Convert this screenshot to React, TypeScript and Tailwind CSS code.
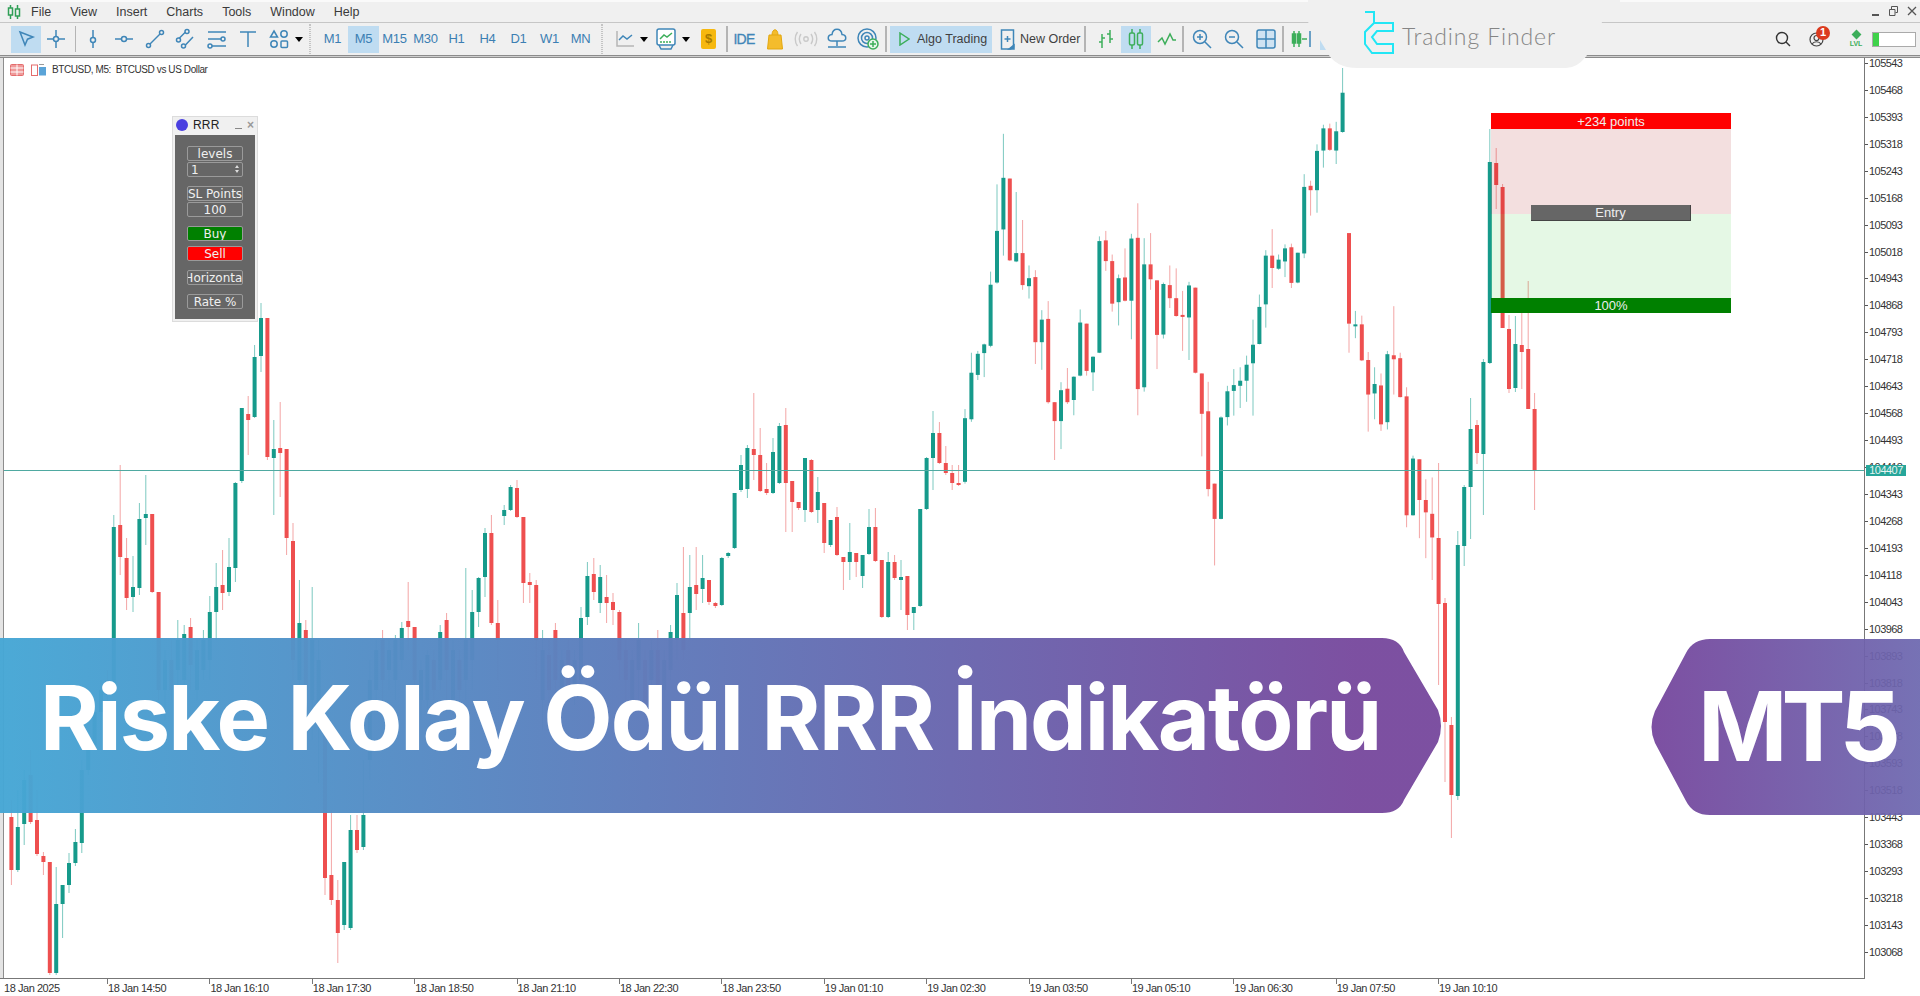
import type { ReactNode } from "react";

const GREEN = "#169a8b";
const RED = "#ee4f4f";
const GREEN_WICK = "#7cc9c0";
const RED_WICK = "#f3a5a5";

// [index, high, bodyTop, bodyBottom, low, up]
type Candle = [number, number, number, number, number, number];

const leftCandles: Candle[] = [
  [-16, 800, 817, 870, 885, 0],
  [-15, 790, 827, 870, 872, 1],
  [-14, 770, 780, 824, 845, 1],
  [-13, 750, 775, 822, 824, 0],
  [-12, 790, 820, 854, 856, 0],
  [-11, 852, 856, 862, 875, 0],
  [-10, 862, 862, 973, 975, 0],
  [-9, 867, 904, 973, 975, 1],
  [-8, 885, 885, 904, 938, 1],
  [-7, 853, 863, 885, 893, 1],
  [-6, 829, 842, 863, 866, 1],
  [-5, 760, 770, 843, 853, 1],
  [-4, 735, 745, 770, 775, 1],
  [-3, 700, 712, 745, 750, 1],
  [-2, 680, 690, 712, 730, 1],
  [-1, 670, 680, 695, 710, 0],
  [0, 515, 527, 690, 695, 1],
  [1, 465, 525, 557, 575, 0],
  [2, 538, 558, 598, 610, 0],
  [3, 556, 587, 597, 612, 1],
  [4, 503, 519, 588, 595, 1],
  [5, 475, 514, 518, 545, 1],
  [6, 514, 514, 592, 593, 0],
  [7, 592, 592, 690, 700, 0],
  [8, 650, 660, 690, 720, 1],
  [9, 640, 660, 690, 700, 0],
  [10, 620, 640, 670, 710, 1],
  [11, 625, 634, 680, 690, 1],
  [12, 618, 627, 665, 690, 0],
  [13, 640, 650, 690, 700, 1],
  [14, 630, 640, 670, 680, 1],
  [15, 596, 612, 660, 680, 1],
  [16, 563, 587, 612, 640, 1],
  [17, 550, 585, 593, 610, 0],
  [18, 538, 567, 592, 596, 1],
  [19, 482, 483, 568, 582, 1],
  [20, 408, 408, 481, 483, 1],
  [21, 396, 414, 420, 455, 0],
  [22, 345, 357, 417, 418, 1],
  [23, 303, 318, 356, 372, 1],
  [24, 318, 318, 457, 460, 0],
  [25, 420, 449, 458, 515, 1],
  [26, 402, 448, 453, 497, 0],
  [27, 449, 449, 538, 555, 0],
  [28, 523, 541, 660, 680, 0],
  [29, 580, 623, 680, 700, 1],
  [30, 620, 630, 690, 720, 0],
  [31, 587, 640, 700, 740, 1],
  [32, 640, 660, 720, 783, 1],
  [33, 700, 720, 878, 895, 0],
  [34, 810, 875, 900, 905, 0],
  [35, 880, 900, 933, 963, 0],
  [36, 862, 862, 925, 930, 1],
  [37, 815, 830, 928, 930, 1],
  [38, 815, 830, 850, 853, 0],
  [39, 760, 815, 847, 850, 1],
  [40, 660, 680, 760, 780, 1],
  [41, 640, 650, 690, 700, 1],
  [42, 630, 640, 680, 710, 0],
  [43, 640, 650, 670, 690, 1],
  [44, 635, 640, 680, 700, 1],
  [45, 622, 628, 660, 670, 1],
  [46, 582, 621, 627, 650, 0],
  [47, 627, 627, 680, 700, 0],
  [48, 660, 670, 700, 720, 1],
  [49, 650, 655, 700, 710, 1],
  [50, 650, 660, 690, 700, 0],
  [51, 625, 632, 680, 690, 1],
  [52, 613, 620, 670, 700, 0],
  [53, 640, 650, 700, 715, 1],
  [54, 650, 660, 690, 700, 0],
  [55, 568, 640, 680, 700, 1],
  [56, 590, 612, 660, 690, 1],
  [57, 577, 578, 612, 627, 1],
  [58, 528, 533, 577, 597, 1],
  [59, 515, 533, 623, 625, 0],
  [60, 600, 623, 640, 680, 0],
  [61, 505, 510, 516, 525, 1],
  [62, 485, 487, 510, 511, 1],
  [63, 480, 488, 517, 518, 0],
  [64, 517, 517, 583, 603, 0],
  [65, 573, 582, 585, 603, 0],
  [66, 580, 585, 640, 680, 0],
  [67, 630, 650, 700, 730, 1],
  [68, 640, 655, 690, 710, 0],
  [69, 623, 630, 680, 700, 0],
  [70, 650, 660, 700, 715, 1],
  [71, 640, 650, 690, 700, 0],
  [72, 650, 660, 690, 705, 1],
  [73, 607, 618, 680, 690, 1],
  [74, 562, 576, 617, 625, 1],
  [75, 558, 574, 592, 600, 0],
  [76, 565, 577, 603, 613, 1],
  [77, 575, 597, 603, 623, 0],
  [78, 593, 602, 610, 625, 0],
  [79, 610, 612, 660, 680, 0],
  [80, 640, 650, 680, 700, 0],
  [81, 650, 660, 700, 710, 1],
  [82, 623, 640, 670, 710, 1],
  [83, 650, 660, 710, 720, 0],
  [84, 640, 650, 680, 700, 1],
  [85, 630, 650, 690, 720, 0],
  [86, 650, 660, 690, 700, 1],
  [87, 625, 632, 670, 680, 1],
  [88, 583, 595, 640, 660, 1],
  [89, 547, 613, 650, 660, 0],
  [90, 555, 587, 613, 640, 1],
  [91, 547, 585, 594, 610, 0],
  [92, 555, 578, 589, 603, 1],
  [93, 580, 580, 602, 605, 0],
  [94, 602, 603, 606, 608, 0],
  [95, 557, 558, 605, 606, 1],
  [96, 552, 553, 556, 558, 1],
  [97, 493, 493, 548, 549, 1],
  [98, 455, 465, 490, 492, 1],
  [99, 445, 448, 489, 498, 1],
  [100, 393, 449, 455, 480, 0],
  [101, 428, 455, 491, 492, 0],
  [102, 463, 489, 493, 495, 0],
  [103, 438, 452, 493, 494, 1],
  [104, 423, 426, 483, 484, 1],
  [105, 408, 425, 483, 532, 0],
  [106, 481, 481, 502, 532, 0],
  [107, 502, 502, 508, 510, 0],
  [108, 458, 458, 510, 522, 1],
  [109, 459, 460, 512, 513, 0],
  [110, 477, 492, 510, 523, 1],
  [111, 503, 503, 543, 553, 0],
  [112, 520, 520, 545, 547, 1],
  [113, 507, 517, 555, 556, 0],
  [114, 557, 557, 562, 590, 0],
  [115, 523, 552, 562, 580, 1],
  [116, 553, 553, 562, 577, 0],
  [117, 555, 555, 576, 588, 1],
  [118, 509, 527, 554, 555, 1],
  [119, 508, 527, 561, 562, 0],
  [120, 560, 560, 617, 618, 0],
  [121, 552, 562, 617, 618, 1],
  [122, 555, 562, 578, 580, 0],
  [123, 560, 577, 580, 610, 1],
  [124, 576, 576, 615, 630, 0],
  [125, 607, 607, 613, 630, 1],
  [126, 509, 509, 606, 607, 1],
  [127, 457, 458, 509, 510, 1],
  [128, 411, 433, 458, 490, 1],
  [129, 422, 433, 463, 464, 0],
  [130, 446, 463, 473, 475, 0],
  [131, 465, 473, 483, 490, 0],
  [132, 465, 483, 484, 486, 0],
];

// read off the right half of the chart, y still in crop units
const rightRaw: [number, number, number, number, number][] = [
  [960, 985, 1160, 1165, 1], [805, 860, 988, 995, 1], [800, 808, 866, 880, 1], [780, 782, 806, 872, 1],
  [582, 618, 786, 790, 1], [342, 470, 612, 615, 1], [203, 324, 466, 538, 1], [326, 326, 551, 553, 0],
  [363, 531, 554, 556, 1], [440, 531, 619, 632, 0], [565, 600, 622, 656, 1], [578, 597, 776, 836, 0],
  [688, 714, 776, 852, 1], [663, 712, 941, 945, 0], [941, 941, 993, 1100, 0], [886, 908, 993, 1070, 1],
  [847, 904, 941, 946, 0], [870, 871, 935, 977, 1], [686, 722, 868, 870, 1], [725, 725, 855, 868, 0],
  [815, 816, 859, 910, 1], [485, 498, 805, 806, 1], [470, 496, 553, 580, 0], [535, 553, 670, 692, 0],
  [590, 600, 666, 730, 1], [518, 598, 662, 664, 0], [478, 491, 662, 768, 1], [394, 489, 905, 977, 0],
  [490, 562, 900, 912, 1], [476, 562, 603, 632, 0], [606, 606, 756, 850, 0], [612, 616, 755, 766, 1],
  [565, 619, 655, 682, 0], [573, 655, 704, 706, 0], [635, 701, 704, 800, 0], [610, 620, 708, 825, 1],
  [626, 626, 860, 862, 0], [862, 862, 973, 1090, 0], [885, 966, 1180, 1200, 0], [1165, 1165, 1262, 1390, 0],
  [980, 983, 1262, 1263, 1], [896, 911, 982, 1005, 1], [850, 894, 910, 978, 1], [845, 882, 896, 957, 1],
  [813, 838, 882, 940, 1], [714, 783, 834, 978, 1], [645, 679, 781, 782, 1], [523, 538, 672, 736, 1],
  [465, 538, 572, 627, 0], [535, 549, 574, 577, 1], [507, 518, 554, 597, 1], [505, 515, 613, 627, 0],
  [530, 530, 612, 614, 1], [314, 349, 532, 545, 1], [332, 346, 358, 428, 0], [232, 250, 358, 420, 1],
  [178, 188, 249, 296, 1], [175, 188, 247, 250, 0], [170, 196, 249, 286, 1], [22, 90, 198, 200, 1],
  [476, 476, 725, 805, 0], [690, 727, 731, 765, 1], [703, 727, 826, 828, 0], [803, 825, 920, 1022, 0],
  [845, 891, 917, 988, 1], [862, 895, 1002, 1020, 0], [800, 809, 996, 1016, 1], [677, 812, 823, 920, 0],
  [805, 820, 927, 928, 0], [900, 925, 1252, 1285, 0], [1088, 1096, 1252, 1253, 1], [1098, 1098, 1210, 1315, 0],
  [1153, 1210, 1244, 1370, 0], [1148, 1248, 1313, 1430, 0],
];

const rightCandles: Candle[] = rightRaw.map((c, i) => [
  133 + i,
  60 + c[0] / 2.75,
  60 + c[1] / 2.75,
  60 + c[2] / 2.75,
  60 + c[3] / 2.75,
  c[4],
]);

const lastCandles: Candle[] = [
  [207, 463, 538, 604, 685, 0],
  [208, 598, 603, 722, 782, 0],
  [209, 717, 725, 795, 838, 0],
  [210, 531, 545, 796, 800, 1],
  [211, 485, 487, 546, 566, 1],
  [212, 398, 429, 487, 539, 1],
  [213, 420, 425, 453, 464, 0],
  [214, 359, 362, 454, 515, 1],
  [215, 129, 162, 363, 364, 1],
  [216, 148, 163, 185, 209, 0],
  [217, 184, 187, 328, 328, 0],
  [218, 315, 329, 389, 393, 0],
  [219, 316, 344, 388, 392, 1],
  [220, 313, 345, 352, 389, 0],
  [221, 281, 349, 409, 409, 0],
  [222, 393, 409, 471, 510, 0],
];

const candles = [...leftCandles, ...rightCandles, ...lastCandles];

const prices = [
  105543, 105468, 105393, 105318, 105243, 105168, 105093, 105018, 104943, 104868, 104793, 104718, 104643, 104568,
  104493, 104418, 104343, 104268, 104193, 104118, 104043, 103968, 103893, 103818, 103743, 103668, 103593, 103518,
  103443, 103368, 103293, 103218, 103143, 103068,
];

const times = [
  "18 Jan 14:50", "18 Jan 16:10", "18 Jan 17:30", "18 Jan 18:50", "18 Jan 21:10", "18 Jan 22:30", "18 Jan 23:50",
  "19 Jan 01:10", "19 Jan 02:30", "19 Jan 03:50", "19 Jan 05:10", "19 Jan 06:30", "19 Jan 07:50", "19 Jan 10:10",
];

const timeframes = ["M1", "M5", "M15", "M30", "H1", "H4", "D1", "W1", "MN"];
const menus = ["File", "View", "Insert", "Charts", "Tools", "Window", "Help"];

const BLUE = "#3f86b8";
const LIME = "#3cae5a";

const Svg = ({ children, w = 22, h = 22 }: { children: ReactNode; w?: number; h?: number }) => (
  <svg width={w} height={h} viewBox={`0 0 ${w} ${h}`} fill="none" stroke={BLUE} strokeWidth="1.5">
    {children}
  </svg>
);

const Tool = ({ children, width, active }: { children: ReactNode; width: string; active?: boolean }) => (
  <div className={`flex h-[27px] shrink-0 items-center justify-center ${width} ${active ? "bg-[#bfdcf1]" : ""}`}>
    {children}
  </div>
);

const Caret = () => (
  <div className="flex w-[10px] shrink-0 justify-center">
    <div className="h-0 w-0 border-x-[4px] border-t-[5px] border-x-transparent border-t-black" />
  </div>
);

const Divider = () => <div className="h-[26px] w-[2px] shrink-0 bg-[#b4b4b4]" />;
const Dotted = () => <div className="h-[30px] w-[2px] shrink-0 border-x border-dotted border-[#c4c4c4]" />;

const PanelBox = ({ children, extra }: { children: ReactNode; extra?: string }) => (
  <div
    className={`flex h-[15px] w-[56px] items-center justify-center overflow-hidden rounded-[2px] border border-[#9a9a9a] text-[12px] leading-none text-[#f0f0f0] ${extra ?? ""}`}
  >
    <span className="shrink-0">{children}</span>
  </div>
);

const Chart = () => (
  <svg width="1860" height="920" viewBox="4 58 1860 920" className="block">
    {candles.map(([k, hi, top, bot, lo, up]) => {
      const x = 113.8 + 6.4 * k;
      return (
        <g key={k}>
          <line x1={x} x2={x} y1={hi} y2={lo} stroke={up ? GREEN_WICK : RED_WICK} strokeWidth="1" />
          <rect x={x - 2} y={top} width="4" height={Math.max(bot - top, 2)} fill={up ? GREEN : RED} />
        </g>
      );
    })}
    <line x1="4" x2="1864" y1="470.5" y2="470.5" stroke="#4fa9a1" strokeWidth="1" />
  </svg>
);

const App = () => {
  return (
    <div className="relative flex h-[996px] w-[1920px] flex-col overflow-hidden bg-[#f0f0f0] font-['Liberation_Sans',sans-serif]">
      {/* menu */}
      <div className="flex h-[23px] shrink-0 items-center border-b border-t-2 border-b-[#c6c6c6] border-t-[#fafafa] pl-[7px] text-[12.5px] text-[#3a3a3a]">
        <svg width="14" height="14" viewBox="0 0 14 14" fill="none" stroke="#2f9e55" strokeWidth="1.5">
          <path d="M3.5 0v14M10.5 0v14" />
          <rect x="1.5" y="3" width="4" height="7" fill="#f0f0f0" />
          <rect x="8.5" y="4" width="4" height="7" fill="#f0f0f0" />
        </svg>
        <div className="ml-[10px] flex gap-[19px] pt-px">
          {menus.map((m) => (
            <span key={m}>{m}</span>
          ))}
        </div>
        <div className="ml-auto mr-[3px] flex items-center gap-[9px] pb-[2px]">
          <div className="mt-[8px] h-[2px] w-[7px] bg-[#555]" />
          <svg width="10" height="10" viewBox="0 0 10 10" fill="none" stroke="#555">
            <path d="M1.5 3.5h5.5v6h-5.5zM3.5 3V.5h6v6H7.5" />
          </svg>
          <svg width="10" height="10" viewBox="0 0 10 10" fill="none" stroke="#555" strokeWidth="1.3">
            <path d="M1 1l8 8M9 1l-8 8" />
          </svg>
        </div>
      </div>

      {/* toolbar */}
      <div className="flex h-[32px] shrink-0 items-center pl-[11px] text-[13px] text-[#3f3f3f]">
        <Tool width="w-[30px]" active>
          <Svg>
            <path d="M5 4l13 5-5.5 2.2L10 17z" />
          </Svg>
        </Tool>
        <Tool width="w-[30px]">
          <Svg>
            <path d="M11 2v18M2 11h18" />
            <circle cx="11" cy="11" r="2.5" fill="#f0f0f0" />
          </Svg>
        </Tool>
        <div className="ml-[4px] mr-[1px]">
          <div className="h-[26px] w-px bg-[#b4b4b4]" />
        </div>
        <Tool width="w-[31px]">
          <Svg>
            <path d="M11 2v18" />
            <circle cx="11" cy="12" r="2.5" fill="#f0f0f0" />
          </Svg>
        </Tool>
        <Tool width="w-[31px]">
          <Svg>
            <path d="M2 11h18" />
            <circle cx="11" cy="11" r="2.5" fill="#f0f0f0" />
          </Svg>
        </Tool>
        <Tool width="w-[31px]">
          <Svg>
            <path d="M5.5 16.5L16.5 5.5" />
            <circle cx="4.5" cy="17.5" r="2" fill="#f0f0f0" />
            <circle cx="17.5" cy="4.5" r="2" fill="#f0f0f0" />
          </Svg>
        </Tool>
        <Tool width="w-[31px]">
          <Svg>
            <path d="M3.5 11L11 3.5M9 18.5L18 9" />
            <circle cx="3.5" cy="12" r="2" fill="#f0f0f0" />
            <circle cx="12" cy="3.5" r="2" fill="#f0f0f0" />
            <circle cx="8.5" cy="18" r="2" fill="#f0f0f0" />
          </Svg>
        </Tool>
        <Tool width="w-[31px]">
          <Svg>
            <path d="M2 4h18M2 11h13M6 18h14" />
            <circle cx="17" cy="11" r="2" fill="#f0f0f0" />
            <circle cx="4" cy="18" r="2" fill="#f0f0f0" />
          </Svg>
        </Tool>
        <Tool width="w-[31px]">
          <Svg>
            <path d="M3 4h16M11 4v15" />
          </Svg>
        </Tool>
        <Tool width="w-[31px]">
          <Svg>
            <path d="M6 3l3.5 6h-7z" />
            <circle cx="16" cy="6" r="3.2" />
            <circle cx="6" cy="16" r="3.2" />
            <rect x="13" y="13" width="6.5" height="6.5" rx="1" />
          </Svg>
        </Tool>
        <Caret />
        <div className="ml-[5px] mr-[6px]">
          <Dotted />
        </div>
        {timeframes.map((t) => (
          <Tool key={t} width="w-[31px]" active={t === "M5"}>
            <span className="text-[13px] tracking-[-0.3px] text-[#3c7fb3]">{t}</span>
          </Tool>
        ))}
        <div className="ml-[5px] mr-[8px]">
          <Dotted />
        </div>
        <Tool width="w-[28px]">
          <Svg>
            <path d="M3 3v15h17" stroke="#b5b5b5" />
            <path d="M5 12l4-4 4 3 5-4" />
          </Svg>
        </Tool>
        <Caret />
        <div className="ml-[3px]">
          <Tool width="w-[28px]">
            <Svg w={24} h={24}>
              <rect x="3" y="2" width="18" height="16" rx="2" fill="#fff" />
              <path d="M6 12l4-4 3 2 5-4" stroke={LIME} />
              <path d="M6 15h12" stroke={LIME} strokeDasharray="2 1" />
              <path d="M5 18l2 4h10l2-4" />
            </Svg>
          </Tool>
        </div>
        <div className="ml-px">
          <Caret />
        </div>
        <div className="ml-[10px] mr-[10px] flex h-[20px] w-[15px] shrink-0 items-center justify-center rounded-[2px] bg-[#f6b80f] text-[13px] font-bold text-[#a87b00]">
          $
        </div>
        <div className="mr-px">
          <Divider />
        </div>
        <Tool width="w-[30px]">
          <span className="text-[14px] tracking-[-0.8px] text-[#3f86b8] [-webkit-text-stroke:0.3px_#3f86b8]">IDE</span>
        </Tool>
        <Tool width="w-[31px]">
          <svg width="18" height="22" viewBox="0 0 18 22" fill="#f4bc2c" stroke="#e3a70f" strokeWidth="1">
            <path d="M3 7h12l1.5 14h-15zM6 7c0-7 6-7 6 0" fillOpacity="1" />
          </svg>
        </Tool>
        <Tool width="w-[31px]">
          <svg width="24" height="16" viewBox="0 0 24 16" fill="none" stroke="#c9c9c9" strokeWidth="1.4">
            <circle cx="12" cy="8" r="2.2" />
            <path d="M7 3c-2 3-2 7 0 10M17 3c2 3 2 7 0 10M3.5 1c-3 4-3 10 0 14M20.5 1c3 4 3 10 0 14" />
          </svg>
        </Tool>
        <Tool width="w-[31px]">
          <Svg>
            <path d="M6 13c-5 0-5-6 0-6.500C7-.5 15-.5 16 6.500c5 .5 5 6.500 0 6.500z" />
            <path d="M11 13v5M2 19h18" />
          </Svg>
        </Tool>
        <Tool width="w-[31px]">
          <Svg w={24} h={24}>
            <circle cx="11" cy="11" r="9" />
            <circle cx="11" cy="11" r="5.5" />
            <circle cx="11" cy="11" r="2" />
            <circle cx="17" cy="17" r="5" fill="#e8f6ec" stroke={LIME} />
            <path d="M17 14v6M14 17h6" stroke={LIME} />
          </Svg>
        </Tool>
        <div className="ml-[2px] mr-[3px]">
          <Divider />
        </div>
        <div className="flex h-[27px] w-[102px] shrink-0 items-center bg-[#bfdcf1] pl-[9px]">
          <svg width="11" height="14" viewBox="0 0 11 14" fill="none" stroke={LIME} strokeWidth="1.5">
            <path d="M1 1l9 6-9 6z" />
          </svg>
          <span className="ml-[7px] whitespace-nowrap text-[12.5px]">Algo Trading</span>
        </div>
        <div className="flex w-[92px] shrink-0 items-center pl-[8px]">
          <Svg w={15} h={21}>
            <path d="M1.500 1h12v17l-3 2h-9z" />
            <path d="M7.500 7v6M4.500 10h6" />
            <path d="M9 20l5-4v4z" fill={BLUE} />
          </Svg>
          <span className="ml-[5px] whitespace-nowrap text-[12.5px]">New Order</span>
        </div>
        <Divider />
        <div className="ml-[4px]" />
        <Tool width="w-[31px]">
          <Svg>
            <g stroke={LIME}>
              <path d="M7 6v14M4 14h3M7 10h3M15 2v13M12 6h3M15 11h3" />
            </g>
          </Svg>
        </Tool>
        <Tool width="w-[30px]" active>
          <Svg>
            <g stroke={LIME}>
              <path d="M7 1v20M15 1v20" />
              <rect x="4.500" y="5" width="5" height="12" rx="1.500" fill="#bfdcf1" />
              <rect x="12.500" y="5" width="5" height="12" rx="1.500" fill="#bfdcf1" />
            </g>
          </Svg>
        </Tool>
        <Tool width="w-[31px]">
          <Svg>
            <path d="M2 14l4-4 3 6 5-10 3 6h3" stroke={LIME} />
          </Svg>
        </Tool>
        <Divider />
        <div className="ml-[2px]" />
        <Tool width="w-[32px]">
          <Svg>
            <circle cx="9" cy="9" r="6.500" />
            <path d="M14 14l6 6M6 9h6M9 6v6" />
          </Svg>
        </Tool>
        <Tool width="w-[32px]">
          <Svg>
            <circle cx="9" cy="9" r="6.500" />
            <path d="M14 14l6 6M6 9h6" />
          </Svg>
        </Tool>
        <Tool width="w-[32px]">
          <Svg>
            <rect x="2" y="2" width="18" height="18" rx="2" fill="#cfe3f2" />
            <path d="M11 2v18M2 11h18" />
          </Svg>
        </Tool>
        <Divider />
        <div className="ml-px" />
        <Tool width="w-[32px]">
          <Svg>
            <g stroke={LIME}>
              <path d="M4 3v16M9 3v16" />
              <rect x="2.500" y="6" width="3" height="9" fill={LIME} />
              <rect x="7.500" y="6" width="3" height="9" fill={LIME} />
              <path d="M12 11h5" />
            </g>
            <path d="M20 3v16" />
          </Svg>
        </Tool>
        <svg width="8" height="12" viewBox="0 0 8 12" className="ml-[3px] mt-[9px]">
          <path d="M0 0L8 12H0z" fill="#bfdcf1" />
        </svg>
        <div className="ml-auto flex items-center pr-[4px]">
          <svg width="16" height="16" viewBox="0 0 16 16" fill="none" stroke="#333" strokeWidth="1.4" className="-translate-x-px">
            <circle cx="7" cy="7" r="5.500" />
            <path d="M11 11l4 4" />
          </svg>
          <div className="relative ml-[17px] mr-[26px]">
            <svg width="15" height="15" viewBox="0 0 15 15" fill="none" stroke="#444" strokeWidth="1.2">
              <circle cx="7.500" cy="7.500" r="6.500" />
              <circle cx="7.500" cy="6" r="2.500" />
              <path d="M3 12c2-3 7-3 9 0" />
            </svg>
            <div className="absolute -top-[6px] left-[7px] flex h-[14px] w-[14px] items-center justify-center rounded-full bg-[#db3a1e] text-[11px] font-bold text-white">
              1
            </div>
          </div>
          <div className="flex w-[12px] flex-col items-center text-[7px] font-bold leading-none text-[#3cae5a]">
            <div className="mb-[2px] h-[7px] w-[7px] rotate-45 bg-[#3cae5a]" />
            LVL
          </div>
          <div className="ml-[10px] h-[15px] w-[44px] border border-[#aaa] bg-white">
            <div className="h-full w-[6px] bg-[#3fd24a]" />
          </div>
        </div>
      </div>

      <div className="h-[3px] shrink-0 border-y border-[#8c8c8c] bg-[#cfcfcf]" />

      {/* chart + axes */}
      <div className="relative flex min-h-0 flex-1 flex-col bg-white">
        <div className="flex h-[920px] shrink-0">
          <div className="w-[3px] shrink-0 bg-[#e4e4e4]" />
          <div className="relative w-[1862px] shrink-0 border-x border-l-[#8d8d8d] border-r-[#777]">
            <Chart />

            <div className="absolute left-[6px] top-[4px] flex items-center text-[10px] tracking-[-0.4px] text-[#333]">
              <svg width="14" height="12" viewBox="0 0 14 12" fill="#ef9a9a" stroke="#e46c6c">
                <rect x=".5" y=".5" width="13" height="11" rx="1" />
                <path d="M7 .5v11M.5 4h13M.5 8h13" stroke="#fff" />
              </svg>
              <svg width="16" height="12" viewBox="0 0 16 12" fill="none" className="ml-[7px]">
                <rect x=".5" y="1" width="6" height="10.500" stroke="#e46c6c" />
                <rect x="8" y="3" width="7" height="8.500" fill="#5aa4d8" />
                <path d="M8 .5h5" stroke="#9a9a9a" />
              </svg>
              <span className="ml-[5px] whitespace-pre">BTCUSD, M5:  BTCUSD vs US Dollar</span>
            </div>

            {/* RRR panel */}
            <div className="absolute left-[168px] top-[58px] h-[206px] w-[86px] border border-[#dcdcdc] bg-[#f0f0f0] p-[2px]">
              <div className="flex h-[16px] items-center pb-[4px] pl-[1px] text-[12px] font-bold text-[#222]">
                <div className="h-[12px] w-[12px] rounded-full bg-[#4a3fe0]" />
                <span className="ml-[5px] font-normal tracking-[0.2px]">RRR</span>
                <div className="ml-auto mr-[5px] mt-[6px] h-[1px] w-[7px] bg-[#888]" />
                <span className="mr-[1px] text-[12px] text-[#999]">×</span>
              </div>
              <div className="flex h-[184px] flex-col items-center bg-[#666] pt-[11px] font-['DejaVu_Sans',sans-serif]">
                <PanelBox>levels</PanelBox>
                <PanelBox extra="mt-px !justify-start pl-[3px] relative">
                  1
                  <span className="absolute right-[3px] top-[2px] flex flex-col gap-[2px]">
                    <span className="h-0 w-0 border-x-[2px] border-b-[3px] border-x-transparent border-b-[#ddd]" />
                    <span className="h-0 w-0 border-x-[2px] border-t-[3px] border-x-transparent border-t-[#ddd]" />
                  </span>
                </PanelBox>
                <div className="mt-[9px]">
                  <PanelBox>SL Points</PanelBox>
                </div>
                <PanelBox extra="mt-px">100</PanelBox>
                <div className="mt-[9px]">
                  <PanelBox extra="bg-[#008000]">Buy</PanelBox>
                </div>
                <div className="mt-[5px]">
                  <PanelBox extra="bg-[#ff0000]">Sell</PanelBox>
                </div>
                <div className="mt-[9px]">
                  <PanelBox>Horizontal</PanelBox>
                </div>
                <div className="mt-[9px]">
                  <PanelBox>Rate %</PanelBox>
                </div>
              </div>
            </div>

            {/* risk reward box */}
            <div className="absolute left-[1487px] top-[55px] flex w-[240px] flex-col text-[13px] leading-none text-[#eee]">
              <div className="flex h-[16px] items-center justify-center bg-[#ff0000]">+234 points</div>
              <div className="h-[85px] bg-[#a00000]/[.125]" />
              <div className="h-[84px] bg-[#14c014]/[.11]" />
              <div className="flex h-[15px] items-center justify-center bg-[#008000]">100%</div>
              <div className="absolute left-[40px] top-[92px] flex h-[16px] w-[160px] items-center justify-center border-b border-r border-[#444] bg-[#666]">
                Entry
              </div>
            </div>
          </div>

          {/* price axis */}
          <div className="relative min-w-0 flex-1 text-[11px] leading-none tracking-[-0.55px] text-[#333]">
            <div className="flex flex-col">
              {prices.map((p) => (
                <div key={p} className="flex h-[26.94px] shrink-0 items-center first:mt-[-8px]">
                  <div className="h-px w-[3px] bg-[#555]" />
                  <span className="ml-px">{p}</span>
                </div>
              ))}
            </div>
            <div className="absolute left-[1px] top-[407px] flex h-[11px] w-[40px] items-center justify-center bg-[#26a69a] text-[#e6f3f1]">
              104407
            </div>
          </div>
        </div>

        {/* time axis */}
        <div className="flex h-[18px] w-[1865px] shrink-0 border-t border-[#777] text-[11px] leading-none tracking-[-0.45px] text-[#333]">
          <div className="w-[107px] shrink-0 pl-[4px] pt-[4px]">18 Jan 2025</div>
          {times.map((t) => (
            <div key={t} className="h-[5px] w-[102.4px] shrink-0 border-l border-[#777]">
              <div className="whitespace-nowrap pt-[4px]">{t}</div>
            </div>
          ))}
        </div>
      </div>

      {/* brand plate */}
      <svg width="312" height="68" viewBox="0 0 312 68" className="absolute left-[1308px] top-0">
        <path d="M0 0H312V22H294Q280 68 258 68H50Q26 68 18 50Q10 36 0 22Z" fill="#f0f0f0" />
      </svg>
      <div className="absolute left-[1364px] top-[11px] flex items-start">
        <svg width="32" height="44" viewBox="0 0 32 44" fill="none" stroke="#22e6f5" strokeWidth="2">
          <path d="M1 1H10V12H29V20H13L8 26L13 33H29V42H8L1 33V21L10 12" />
        </svg>
        <span className="ml-[6px] mt-[14px] font-['Lato',sans-serif] text-[23px] font-light leading-none tracking-[0.9px] text-[#858585]">
          Trading Finder
        </span>
      </div>

      {/* banners */}
      <div className="absolute left-0 top-[638px] flex h-[175px] w-[1442px] items-center bg-[linear-gradient(90deg,rgba(70,167,213,0.97),rgba(123,78,160,0.99)_94%)] pl-[40px] [clip-path:path('M0_0H1382Q1399_0_1404_14L1438_72Q1444_88_1438_104L1404_162Q1399_175_1382_175H0Z')]">
        <span className="whitespace-nowrap pb-[16px] font-['Inter',sans-serif] text-[90px] font-bold leading-none tracking-[-1.9px] text-white">
          Riske Kolay Ödül RRR İndikatörü
        </span>
      </div>
      <div className="absolute left-[1651px] top-[639px] flex h-[176px] w-[269px] items-center bg-[linear-gradient(90deg,rgba(122,76,160,0.98),rgba(108,103,175,0.93))] pl-[47px] [clip-path:path('M269_0H59Q42_0_35_14L4_72Q-3_88_4_104L35_162Q42_176_59_176H269Z')]">
        <span className="whitespace-nowrap pb-[3px] font-['Inter',sans-serif] text-[96px] font-bold leading-none tracking-[-6px] text-white">
          MT5
        </span>
      </div>
    </div>
  );
};

export default App;
